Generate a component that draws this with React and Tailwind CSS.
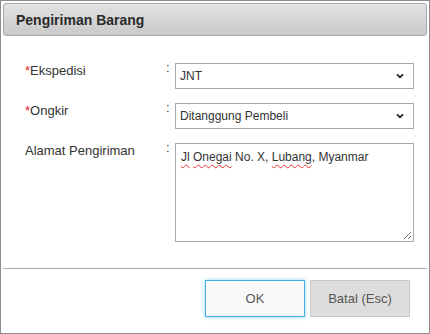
import React from "react";

function Chevron() {
  return (
    <svg width="8" height="6" viewBox="0 0 8 6" className="shrink-0">
      <path d="M1 1.3 L4 4.3 L7 1.3" fill="none" stroke="#222" strokeWidth="1.8" />
    </svg>
  );
}

function Select({ value }) {
  return (
    <div className="flex h-[26px] w-[239px] items-center justify-between border border-[#aaa] bg-white pl-[4px] pr-[9px] text-[12px] text-[#333]">
      <span>{value}</span>
      <Chevron />
    </div>
  );
}

function Row({ label, required, children }) {
  return (
    <div className="flex items-start">
      <div className="w-[141px] text-[13px] leading-[15px] text-[#333]">
        {required && <span className="text-[#e02020]">*</span>}
        {label}
      </div>
      <div className="-mt-[3px] w-[9px] text-[13px] leading-[15px] text-[#333]">:</div>
      {children}
    </div>
  );
}

const sq = "underline decoration-wavy decoration-[#e33] decoration-1 underline-offset-[3px]";

export default function App() {
  return (
    <div
      className="flex h-[334px] w-[430px] flex-col border border-[#8c8c8c] bg-white p-[2px]"
      style={{ fontFamily: '"Liberation Sans", Arial, sans-serif' }}
    >
      <div className="flex h-[33px] items-center rounded-[3px] border border-[#aaa] bg-gradient-to-b from-[#e2e2e2] to-[#c9c9c9] pl-[12px] pt-px text-[14px] font-bold text-[#2a2a2a]">
        Pengiriman Barang
      </div>

      <div className="flex flex-col gap-[14px] pl-[22px] pt-[27px]">
        <Row label="Ekspedisi" required>
          <Select value="JNT" />
        </Row>
        <Row label="Ongkir" required>
          <Select value="Ditanggung Pembeli" />
        </Row>
        <Row label="Alamat Pengiriman">
          <div className="relative h-[99px] w-[239px] border border-[#aaa] bg-white px-[5px] pt-[6px] text-[12px] leading-[14px] text-[#333]">
            <span className={sq}>Jl</span> <span className={sq}>Onegai</span> No. X, <span className={sq}>Lubang</span>, Myanmar
            <svg width="10" height="10" viewBox="0 0 10 10" className="absolute bottom-[1px] right-[1px]">
              <path d="M9 2 L2 9 M9 6 L6 9" stroke="#777" strokeWidth="1" />
            </svg>
          </div>
        </Row>
      </div>

      <div className="mt-[26px] h-px bg-[#aaa]" />

      <div className="flex justify-end gap-[5px] pr-[17px] pt-[11px]">
        <button className="h-[37px] w-[100px] border border-[#45aee6] bg-[#fafafa] text-[13px] text-[#555] shadow-[0_0_4px_#8fd0f5]">
          OK
        </button>
        <button className="h-[37px] w-[100px] border border-[#c8c8c8] bg-[#dddddd] text-[13px] text-[#555]">
          Batal (Esc)
        </button>
      </div>
    </div>
  );
}
